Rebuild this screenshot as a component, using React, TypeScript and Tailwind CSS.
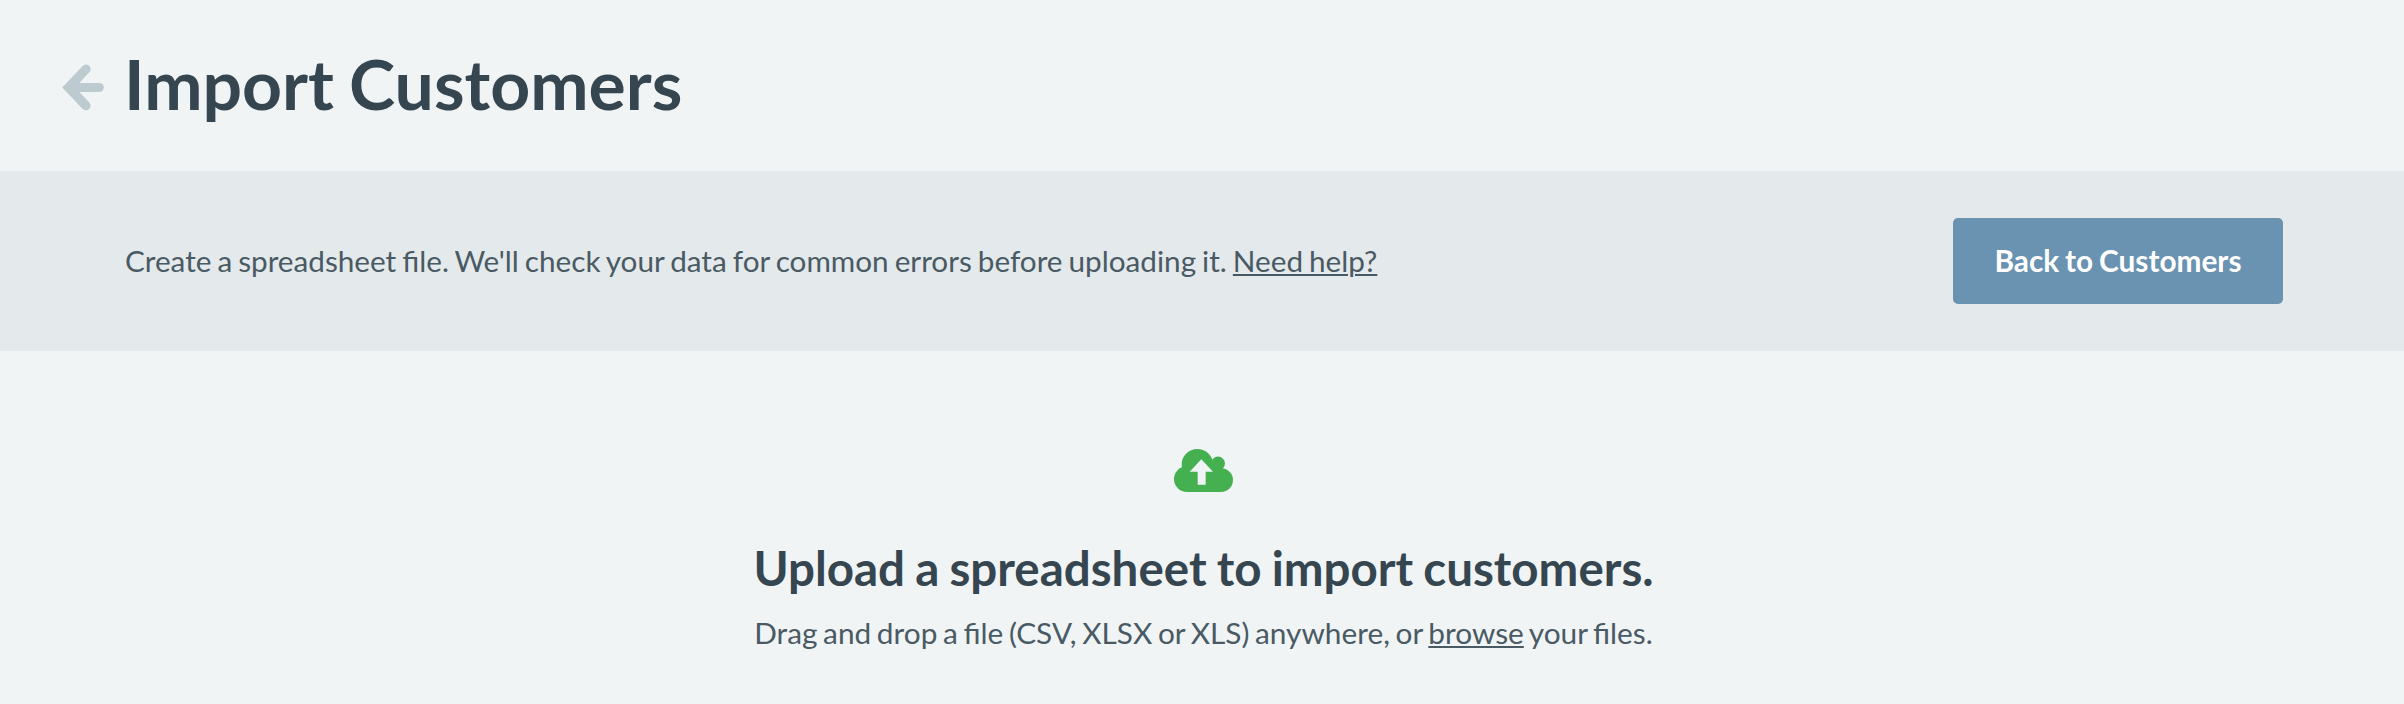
function BackArrow() {
  return (
    <svg className="h-[48px] w-[43px]" viewBox="0 0 43 48" fill="none" stroke="#bdcad0" strokeWidth="9.2" strokeLinecap="round">
      <path d="M24 5.2 6.6 23.5 24 41.7" />
      <path d="M8 23.5H37.2" />
    </svg>
  );
}

function CloudUpload() {
  return (
    <svg className="h-[43px] w-[59px]" viewBox="43 42 177 130" preserveAspectRatio="none">
      <g fill="#45b050">
        <circle cx="82" cy="133" r="39" />
        <circle cx="113" cy="89" r="47" />
        <circle cx="175" cy="86" r="21" />
        <circle cx="184" cy="136" r="36" />
        <path d="M82 90H185V172H82z" />
      </g>
      <path d="M125 73 160 111H138V150H114V111H90z" fill="#f0f4f5" />
    </svg>
  );
}

export default function App() {
  return (
    <div className="flex h-[704px] w-[2404px] flex-col overflow-hidden bg-[#f0f4f5] font-['Lato',sans-serif] text-[#495a64]">
      <header className="flex h-[171px] items-center pb-[5px] pl-[62px]">
        <a className="mt-[9px] mr-[19px]"><BackArrow /></a>
        <h1 className="text-[69.7px] leading-[70px] font-bold text-[#364650] [word-spacing:-2px]">Import Customers</h1>
      </header>
      <section className="flex h-[180px] items-center justify-between bg-[#e4e9eb] pr-[121px] pl-[125px]">
        <p className="text-[29.7px] leading-[36px] [word-spacing:-1.6px]">
          Create a spreadsheet file. We'll check your data for common errors before uploading it.{" "}
          <a className="underline decoration-2 underline-offset-[2px]">Need help?</a>
        </p>
        <button className="h-[86px] w-[330px] rounded-[5px] bg-[#6a92b1] text-[29.8px] leading-[36px] font-bold text-white [word-spacing:-1.4px]">
          Back to Customers
        </button>
      </section>
      <main className="flex flex-col items-center pt-[98px] pl-[3px]">
        <CloudUpload />
        <h2 className="mt-[47px] text-[47.5px] leading-[58px] font-bold text-[#364650] [word-spacing:-1.4px]">
          Upload a spreadsheet to import customers.
        </h2>
        <p className="mt-[18px] text-[29.8px] leading-[36px] [word-spacing:-2px]">
          Drag and drop a file (CSV, XLSX or XLS) anywhere, or{" "}
          <a className="underline decoration-2 underline-offset-[2px]">browse</a> your files.
        </p>
      </main>
    </div>
  );
}
